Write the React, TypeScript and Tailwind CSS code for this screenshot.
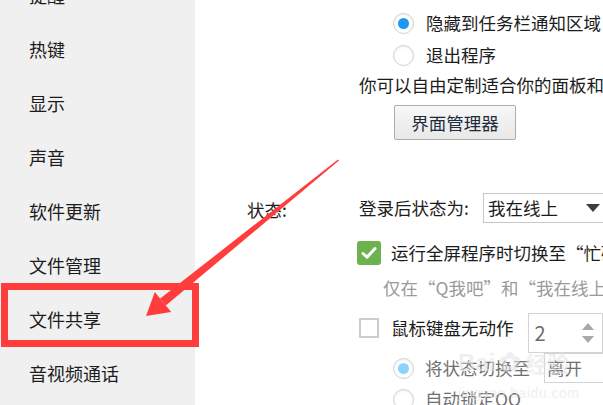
import React from 'react';

const font = "font-['Microsoft_YaHei','Noto_Sans_CJK_SC',sans-serif]";

const navItems = ['提醒', '热键', '显示', '声音', '软件更新', '文件管理', '文件共享', '音视频通话'];

function Radio({ checked, light }: { checked?: boolean; light?: boolean }) {
  return (
    <span className="flex h-[21px] w-[21px] shrink-0 items-center justify-center rounded-full border border-[#cfcfcf] bg-white shadow-[inset_0_1px_2px_rgba(0,0,0,0.08)]">
      {checked && (
        <span className={`h-[11px] w-[11px] rounded-full ${light ? 'bg-[#8dd3fd]' : 'bg-[#1f97f5]'}`} />
      )}
    </span>
  );
}

function GreenCheck() {
  return (
    <span className="flex h-[24px] w-[24px] shrink-0 items-center justify-center rounded-[3px] bg-[#6cb34e]">
      <svg width="16" height="14" viewBox="0 0 16 14">
        <path d="M2 7.5 L6 11.2 L14 2.5" fill="none" stroke="white" strokeWidth="3" strokeLinecap="round" strokeLinejoin="round" />
      </svg>
    </span>
  );
}

function Sidebar() {
  return (
    <div className="w-[195px] shrink-0 bg-[#f0f0f0]">
      <div className="mt-[-32px]">
        {navItems.map((item) => (
          <div key={item} className="flex h-[54px] items-center pl-[29px] text-[18px] text-[#1c1c1c]">
            {item}
          </div>
        ))}
      </div>
    </div>
  );
}

function Content() {
  return (
    <div className="min-w-0 flex-1 overflow-hidden bg-white pt-[7px] text-[17.5px] leading-none text-[#1c1c1c]">
      <div className="flex h-[32px] items-center gap-[12px] pl-[198px] whitespace-nowrap">
        <Radio checked />
        <span>隐藏到任务栏通知区域</span>
      </div>
      <div className="flex h-[32px] items-center gap-[12px] pl-[198px] whitespace-nowrap">
        <Radio />
        <span>退出程序</span>
      </div>
      <div className="flex h-[28px] items-center pl-[164px] whitespace-nowrap">你可以自由定制适合你的面板和界面</div>
      <div className="mt-[6px] pl-[199px]">
        <button className="flex h-[35px] w-[122px] items-center justify-center rounded-[2px] border border-[#adadad] bg-gradient-to-b from-[#f7f7f7] to-[#e8e8e8] text-[17.5px] text-[#1d2b3a]">
          界面管理器
        </button>
      </div>

      <div className="mt-[53px] flex h-[30px] items-center whitespace-nowrap">
        <span className="w-[164px] shrink-0 pl-[52px] pt-[3px]">状态:</span>
        <span className="w-[124px] shrink-0">登录后状态为:</span>
        <div className="flex h-[30px] min-w-0 flex-1 items-center border border-r-0 border-[#c8c8c8] pl-[4px]">
          <span className="flex-1">我在线上</span>
          <svg width="14" height="8" viewBox="0 0 14 8" className="mr-[3px] shrink-0">
            <path d="M0 0 H14 L7 8 Z" fill="#3c3c3c" />
          </svg>
        </div>
      </div>

      <div className="mt-[15px] flex h-[30px] items-center gap-[10px] pl-[162px] whitespace-nowrap">
        <GreenCheck />
        <span>运行全屏程序时切换至“忙碌”</span>
      </div>
      <div className="mt-[5px] flex h-[30px] items-center pl-[188px] whitespace-nowrap text-[#9a9a9a]">
        仅在“Q我吧”和“我在线上”
      </div>

      <div className="mt-[10px] flex h-[40px] items-start whitespace-nowrap">
        <span className="ml-[164px] mt-[5px] h-[20px] w-[20px] shrink-0 border-2 border-[#cccccc] bg-white" />
        <span className="ml-[12px] mt-[6px] shrink-0">鼠标键盘无动作</span>
        <div className="ml-[14px] flex h-[40px] w-[75px] shrink-0 items-center justify-between border border-[#d4d4d4] pl-[6px] pr-[8px] text-[#6a6a6a]">
          <span className="text-[20px]">2</span>
          <div className="flex flex-col gap-[6px]">
            <svg width="12" height="7" viewBox="0 0 12 7">
              <path d="M0 7 L6 0 L12 7 Z" fill="#a9a9a9" />
            </svg>
            <svg width="12" height="7" viewBox="0 0 12 7">
              <path d="M0 0 H12 L6 7 Z" fill="#a9a9a9" />
            </svg>
          </div>
        </div>
      </div>

      <div className="flex h-[30px] items-center whitespace-nowrap text-[#6f6f6f]">
        <span className="ml-[198px] shrink-0">
          <Radio checked light />
        </span>
        <span className="ml-[11px] w-[119px] shrink-0">将状态切换至</span>
        <div className="flex h-[30px] min-w-0 flex-1 items-center border border-r-0 border-[#d4d4d4] pl-[2px]">离开</div>
      </div>
      <div className="flex h-[32px] items-center gap-[11px] pl-[198px] whitespace-nowrap text-[#6f6f6f]">
        <Radio />
        <span>自动锁定QQ</span>
      </div>
    </div>
  );
}

function Watermark() {
  return (
    <div className="pointer-events-none absolute left-[458px] top-[343px] flex flex-col text-[#e6e6e6] opacity-60">
      <div className="flex items-center gap-[4px] font-['Liberation_Sans',sans-serif] text-[24px] font-bold">
        <span>Bai</span>
        <span className="text-[26px]">✿</span>
        <span className="font-['Noto_Sans_CJK_SC',sans-serif] text-[22px]">经验</span>
      </div>
      <span className="mt-[1px] font-['Liberation_Sans',sans-serif] text-[14px] tracking-[0.5px]">jingyan.baidu.com</span>
    </div>
  );
}

function Annotation() {
  return (
    <>
      <div className="pointer-events-none absolute left-[1px] top-[283px] h-[64px] w-[198px] border-[7px] border-[#ff3d3d]" />
      <svg className="pointer-events-none absolute left-0 top-0" width="603" height="405" viewBox="0 0 603 405">
        <polygon points="338,159.5 339,160.5 165.8,305.5 160.2,298.5" fill="#ff3d3d" />
        <polygon points="146,316 154.8,291.9 171.2,312.1" fill="#ff3d3d" />
      </svg>
    </>
  );
}

export default function App() {
  return (
    <div className={`relative flex h-[405px] w-[603px] overflow-hidden ${font}`}>
      <Sidebar />
      <Content />
      <Watermark />
      <Annotation />
    </div>
  );
}
